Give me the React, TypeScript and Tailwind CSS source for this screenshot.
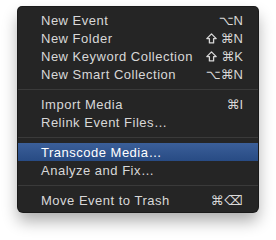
import React from "react";

type Item =
  | { type: "item"; label: string; shortcut?: React.ReactNode; active?: boolean }
  | { type: "sep" };

const sym = "font-['DejaVu_Sans',sans-serif]";

function Shift() {
  return (
    <svg width="11" height="11" viewBox="0 0 11 11" className="mr-[4px]">
      <path
        d="M5.5 0.9 L10.2 5.6 H7.6 V9.9 H3.4 V5.6 H0.8 Z"
        fill="none"
        stroke="currentColor"
        strokeWidth="1.3"
        strokeLinejoin="round"
      />
    </svg>
  );
}

const items: Item[] = [
  { type: "item", label: "New Event", shortcut: <><span className={sym}>⌥</span>N</> },
  { type: "item", label: "New Folder", shortcut: <><Shift /><span className={sym}>⌘</span>N</> },
  { type: "item", label: "New Keyword Collection", shortcut: <><Shift /><span className={sym}>⌘</span>K</> },
  { type: "item", label: "New Smart Collection", shortcut: <><span className={sym}>⌥</span><span className={sym}>⌘</span>N</> },
  { type: "sep" },
  { type: "item", label: "Import Media", shortcut: <><span className={sym}>⌘</span>I</> },
  { type: "item", label: "Relink Event Files…" },
  { type: "sep" },
  { type: "item", label: "Transcode Media…", active: true },
  { type: "item", label: "Analyze and Fix…" },
  { type: "sep" },
  { type: "item", label: "Move Event to Trash", shortcut: <><span className={sym}>⌘</span><span className={`${sym} ml-[1px]`}>⌫</span></> },
];

export default function App() {
  return (
    <div className="w-[276px] h-[240px] bg-white overflow-hidden pt-[7px] pl-[18px] font-['Liberation_Sans',Arial,sans-serif]">
      <div className="w-[240px] bg-[#252525] rounded-t-[4px] rounded-b-[5px] pt-[4px] pb-[3px] shadow-[0_9px_16px_rgba(0,0,0,0.33)] ring-1 ring-[#1a1a1a]">
        {items.map((it, i) =>
          it.type === "sep" ? (
            <div key={i} className="h-[12px] flex items-center">
              <div className="w-full h-px bg-[#3a3a3a]" />
            </div>
          ) : (
            <div
              key={i}
              className={`h-[18px] flex items-center justify-between pl-[23px] pr-[15px] text-[13px] leading-none tracking-[0.5px] ${
                it.active
                  ? "bg-gradient-to-b from-[#3b5f99] to-[#284b84] text-white"
                  : "text-[#d8d8d8]"
              }`}
            >
              <span>{it.label}</span>
              {it.shortcut && <span className="flex items-center tracking-normal">{it.shortcut}</span>}
            </div>
          )
        )}
      </div>
    </div>
  );
}
